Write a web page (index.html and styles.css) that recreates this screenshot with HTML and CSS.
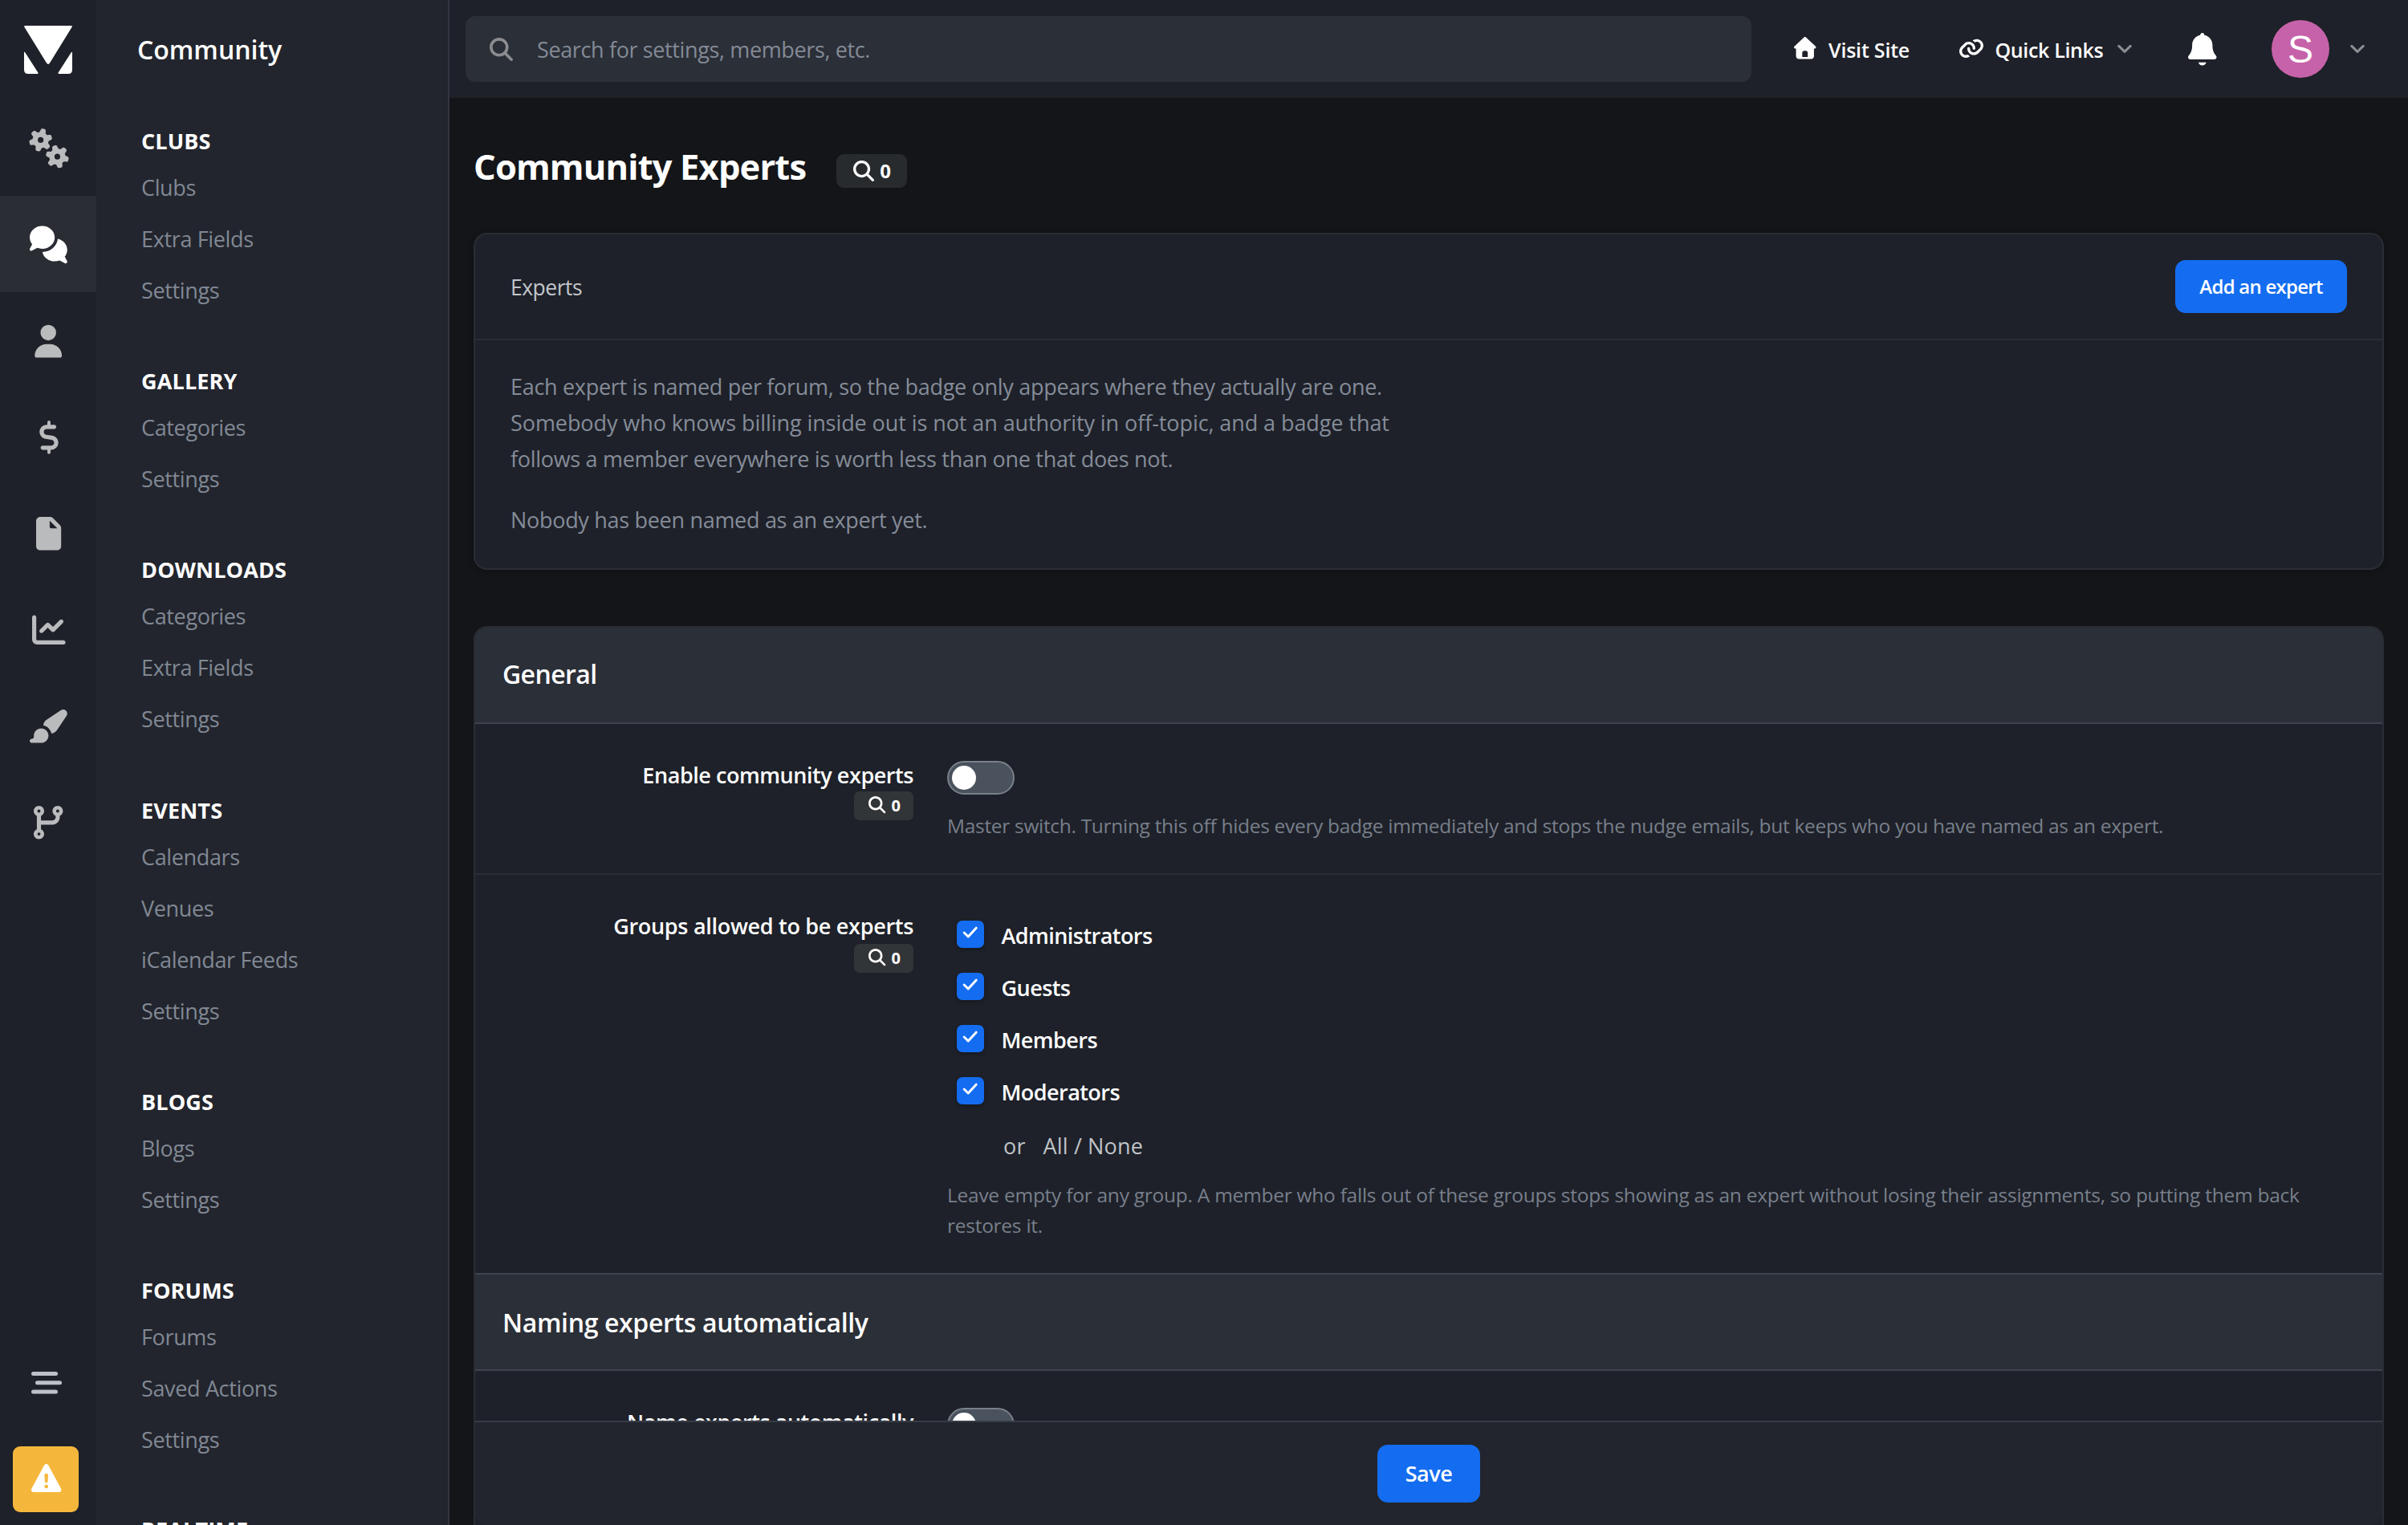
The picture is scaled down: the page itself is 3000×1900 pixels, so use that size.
FILE: index.html
```html
<!DOCTYPE html>
<html lang="en">
<head>
<meta charset="utf-8">
<title>Community Experts</title>
<link rel="stylesheet" href="styles.css">
</head>
<body>
<svg class="sprite" aria-hidden="true">
  <symbol id="i-search" viewBox="0 0 512 512"><path d="M416 208c0 45.9-14.9 88.3-40 122.7L502.6 457.4c12.5 12.5 12.5 32.8 0 45.3s-32.8 12.5-45.3 0L330.7 376C296.3 401.1 253.9 416 208 416 93.1 416 0 322.9 0 208S93.1 0 208 0 416 93.1 416 208zM208 352a144 144 0 1 0 0-288 144 144 0 1 0 0 288z"/></symbol>
  <symbol id="i-check" viewBox="0 0 20 16"><path d="M2.2 8.2L7.4 13.4L17.6 2.2" fill="none" stroke="#fff" stroke-width="3" stroke-linecap="round" stroke-linejoin="round"/></symbol>
  <symbol id="i-angle" viewBox="0 0 18 10"><path d="M1.8 1.4L9 8.4L16.2 1.4" fill="none" stroke="currentColor" stroke-width="3" stroke-linecap="round" stroke-linejoin="round"/></symbol>
</svg>
<div class="app">
  <nav class="rail">
    <a class="logo"><svg width="60" height="60" viewBox="0 0 60 60"><path d="M1 0H59Q60.5 0 59.6 1.8L32 46.6Q30 49.4 28 46.6L.4 1.8Q-.5 0 1 0zM0 33Q.4 32.2 1.4 33.6L17.4 58.4Q18 60 16.6 60H5Q0 60 0 55zM60 33Q59.6 32.2 58.6 33.6L42.6 58.4Q42 60 43.4 60H55Q60 60 60 55z"/></svg></a>
    <a class="tab"><svg width="52" height="41.6" viewBox="0 0 640 512"><path d="M415.9 210.5c12.2-3.3 25 2.5 30.5 13.8L465 261.9c10.3 1.4 20.4 4.2 29.9 8.1l35-23.3c10.5-7 24.4-5.6 33.3 3.3l19.2 19.2c8.9 8.9 10.3 22.9 3.3 33.3l-23.3 34.9c1.9 4.7 3.6 9.6 5 14.7 1.4 5.1 2.3 10.1 3 15.2l37.7 18.6c11.3 5.6 17.1 18.4 13.8 30.5l-7 26.2c-3.3 12.1-14.6 20.3-27.2 19.5l-42-2.7c-6.3 8.1-13.6 15.6-21.9 22l2.7 41.9c.8 12.6-7.4 24-19.5 27.2l-26.2 7c-12.2 3.3-24.9-2.5-30.5-13.8l-18.6-37.6c-10.3-1.4-20.4-4.2-29.9-8.1l-35 23.3c-10.5 7-24.4 5.6-33.3-3.3l-19.2-19.2c-8.9-8.9-10.3-22.8-3.3-33.3l23.3-35c-1.9-4.7-3.6-9.6-5-14.7s-2.3-10.2-3-15.2l-37.7-18.6c-11.3-5.6-17-18.4-13.8-30.5l7-26.2c3.3-12.1 14.6-20.3 27.2-19.5l41.9 2.7c6.3-8.1 13.6-15.6 21.9-22l-2.7-41.8c-.8-12.6 7.4-24 19.5-27.2l26.2-7zM448.4 340a44 44 0 1 0 .1 88 44 44 0 1 0 -.1-88zM224.9-45.5l26.2 7c12.1 3.3 20.3 14.7 19.5 27.2l-2.7 41.8c8.3 6.4 15.6 13.8 21.9 22l42-2.7c12.5-.8 23.9 7.4 27.2 19.5l7 26.2c3.2 12.1-2.5 24.9-13.8 30.5l-37.7 18.6c-.7 5.1-1.7 10.2-3 15.2s-3.1 10-5 14.7l23.3 35c7 10.5 5.6 24.4-3.3 33.3L307.3 262c-8.9 8.9-22.8 10.3-33.3 3.3L239 242c-9.5 3.9-19.6 6.7-29.9 8.1l-18.6 37.6c-5.6 11.3-18.4 17-30.5 13.8l-26.2-7c-12.2-3.3-20.3-14.7-19.5-27.2l2.7-41.9c-8.3-6.4-15.6-13.8-21.9-22l-42 2.7c-12.5 .8-23.9-7.4-27.2-19.5l-7-26.2c-3.2-12.1 2.5-24.9 13.8-30.5l37.7-18.6c.7-5.1 1.7-10.1 3-15.2 1.4-5.1 3-10 5-14.7L55.1 46.5c-7-10.5-5.6-24.4 3.3-33.3L77.6-6c8.9-8.9 22.8-10.3 33.3-3.3l35 23.3c9.5-3.9 19.6-6.7 29.9-8.1l18.6-37.6c5.6-11.3 18.3-17 30.5-13.8zM192.4 84a44 44 0 1 0 0 88 44 44 0 1 0 0-88z"/></svg></a>
    <a class="tab tab-active"><svg width="46.8" height="41.6" viewBox="0 0 576 512"><path d="M384 144c0 97.2-86 176-192 176-26.7 0-52.1-5-75.2-14L35.2 349.2c-9.3 4.9-20.7 3.2-28.2-4.2s-9.2-18.9-4.2-28.2l35.6-67.2C14.3 220.2 0 183.6 0 144 0 46.8 86-32 192-32S384 46.8 384 144zm0 368c-94.1 0-172.4-62.1-188.8-144 120-1.5 224.3-86.9 235.8-202.7 83.3 19.2 145 88.3 145 170.7 0 39.6-14.3 76.2-38.4 105.6l35.6 67.2c4.9 9.3 3.2 20.7-4.2 28.2s-18.9 9.2-28.2 4.2L459.2 498c-23.1 9-48.5 14-75.2 14z"/></svg></a>
    <a class="tab"><svg width="36.4" height="41.6" viewBox="0 0 448 512"><path d="M224 248a120 120 0 1 0 0-240 120 120 0 1 0 0 240zm-29.7 56C95.8 304 16 383.8 16 482.3 16 498.7 29.3 512 45.7 512l356.6 0c16.4 0 29.7-13.3 29.7-29.7 0-98.5-79.8-178.3-178.3-178.3l-59.4 0z"/></svg></a>
    <a class="tab"><svg width="26" height="41.6" viewBox="0 0 320 512"><path d="M136 24c0-13.3 10.7-24 24-24s24 10.7 24 24l0 40 56 0c17.7 0 32 14.3 32 32s-14.3 32-32 32l-114.9 0c-24.9 0-45.1 20.2-45.1 45.1 0 22.5 16.5 41.5 38.7 44.7l91.6 13.1c53.8 7.7 93.7 53.7 93.7 108 0 60.3-48.9 109.1-109.1 109.1l-10.9 0 0 40c0 13.3-10.7 24-24 24s-24-10.7-24-24l0-40-72 0c-17.7 0-32-14.3-32-32s14.3-32 32-32l130.9 0c24.9 0 45.1-20.2 45.1-45.1 0-22.5-16.5-41.5-38.7-44.7l-91.6-13.1C55.9 273.5 16 227.4 16 173.1 16 112.9 64.9 64 125.1 64l10.9 0 0-40z"/></svg></a>
    <a class="tab"><svg width="31.2" height="41.6" viewBox="0 0 384 512"><path d="M0 64C0 28.7 28.7 0 64 0L213.5 0c17 0 33.3 6.7 45.3 18.7L365.3 125.3c12 12 18.7 28.3 18.7 45.3L384 448c0 35.3-28.7 64-64 64L64 512c-35.3 0-64-28.7-64-64L0 64zm208-5.5l0 93.5c0 13.3 10.7 24 24 24L325.5 176 208 58.5z"/></svg></a>
    <a class="tab"><svg width="41.6" height="41.6" viewBox="0 0 512 512"><path d="M64 64c0-17.7-14.3-32-32-32S0 46.3 0 64L0 400c0 44.2 35.8 80 80 80l400 0c17.7 0 32-14.3 32-32s-14.3-32-32-32L80 416c-8.8 0-16-7.2-16-16L64 64zm406.6 86.6c12.5-12.5 12.5-32.8 0-45.3s-32.8-12.5-45.3 0L320 210.7l-57.4-57.4c-12.5-12.5-32.8-12.5-45.3 0l-96 96c-12.5 12.5-12.5 32.8 0 45.3s32.8 12.5 45.3 0L240 221.3l57.4 57.4c12.5 12.5 32.8 12.5 45.3 0l128-128z"/></svg></a>
    <a class="tab"><svg width="46.8" height="41.6" viewBox="0 0 576 512"><path d="M480.5 10.3L259.1 158c-29.1 19.4-47.6 50.9-50.6 85.3 62.3 12.8 111.4 61.9 124.3 124.3 34.5-3 65.9-21.5 85.3-50.6L565.7 95.5c6.7-10.1 10.3-21.9 10.3-34.1 0-33.9-27.5-61.4-61.4-61.4-12.1 0-24 3.6-34.1 10.3zM288 400c0-61.9-50.1-112-112-112S64 338.1 64 400c0 3.9 .2 7.8 .6 11.6 1.8 17.5-10.2 36.4-27.8 36.4L32 448c-17.7 0-32 14.3-32 32s14.3 32 32 32l144 0c61.9 0 112-50.1 112-112z"/></svg></a>
    <a class="tab"><svg width="36.4" height="41.6" viewBox="0 0 448 512"><path d="M80 104a24 24 0 1 0 0-48 24 24 0 1 0 0 48zM160 80c0 32.8-19.7 61-48 73.3l0 70.7 176 0c26.5 0 48-21.5 48-48l0-22.7C307.7 141 288 112.8 288 80c0-44.2 35.8-80 80-80s80 35.8 80 80c0 32.8-19.7 61-48 73.3l0 22.7c0 61.9-50.1 112-112 112l-176 0 0 70.7c28.3 12.3 48 40.5 48 73.3 0 44.2-35.8 80-80 80S0 476.2 0 432c0-32.8 19.7-61 48-73.3l0-205.3C19.7 141 0 112.8 0 80 0 35.8 35.8 0 80 0s80 35.8 80 80zM392 80a24 24 0 1 0 -48 0 24 24 0 1 0 48 0zM80 456a24 24 0 1 0 0-48 24 24 0 1 0 0 48z"/></svg></a>
    <div class="rail-foot">
      <svg class="bars" width="38" height="28" viewBox="0 0 38 28"><rect width="33" height="5" rx="2.5"/><rect x="5" y="11.2" width="33" height="5" rx="2.5"/><rect y="22.4" width="33" height="5" rx="2.5"/></svg>
      <a class="warn"><svg width="37.4" height="37.4" viewBox="0 0 512 512"><path d="M256 0c14.7 0 28.2 8.1 35.2 21l216 400c6.7 12.4 6.4 27.4-.8 39.5S486.1 480 472 480L40 480c-14.1 0-27.2-7.4-34.4-19.5s-7.5-27.1-.8-39.5l216-400c7-12.9 20.5-21 35.2-21zm0 352a32 32 0 1 0 0 64 32 32 0 1 0 0-64zm0-192c-18.2 0-32.7 15.5-31.4 33.7l7.4 104c.9 12.6 11.4 22.3 23.9 22.3 12.6 0 23-9.7 23.9-22.3l7.4-104c1.3-18.2-13.1-33.7-31.4-33.7z"/></svg></a>
    </div>
  </nav>

  <aside class="subnav">
    <div class="subnav-title">Community</div>
    <div class="subnav-list">
      <section><h3>CLUBS</h3><a>Clubs</a><a>Extra Fields</a><a>Settings</a></section>
      <section><h3>GALLERY</h3><a>Categories</a><a>Settings</a></section>
      <section><h3>DOWNLOADS</h3><a>Categories</a><a>Extra Fields</a><a>Settings</a></section>
      <section><h3>EVENTS</h3><a>Calendars</a><a>Venues</a><a>iCalendar Feeds</a><a>Settings</a></section>
      <section><h3>BLOGS</h3><a>Blogs</a><a>Settings</a></section>
      <section><h3>FORUMS</h3><a>Forums</a><a>Saved Actions</a><a>Settings</a></section>
      <section><h3>REALTIME</h3></section>
    </div>
  </aside>

  <div class="main">
    <header class="topbar">
      <div class="search"><svg width="29" height="29"><use href="#i-search"/></svg><span>Search for settings, members, etc.</span></div>
      <a class="toplink visit"><svg width="27.5" height="27.5" viewBox="0 0 512 512"><path d="M277.8 8.6c-12.3-11.4-31.3-11.4-43.5 0l-224 208c-9.6 9-12.8 22.9-8 35.1S18.8 272 32 272l16 0 0 176c0 35.3 28.7 64 64 64l288 0c35.3 0 64-28.7 64-64l0-176 16 0c13.2 0 25-8.1 29.8-20.3s1.6-26.2-8-35.1l-224-208zM240 320l32 0c26.5 0 48 21.5 48 48l0 96-128 0 0-96c0-26.5 21.5-48 48-48z"/></svg><span>Visit Site</span></a>
      <a class="toplink quick"><svg width="30" height="26.6" viewBox="0 0 576 512"><path d="M419.5 96c-16.6 0-32.7 4.5-46.8 12.7-15.8-16-34.2-29.4-54.5-39.5 28.2-24 64.1-37.2 101.3-37.2 86.4 0 156.5 70 156.5 156.5 0 41.5-16.5 81.3-45.8 110.6l-71.1 71.1c-29.3 29.3-69.1 45.8-110.6 45.8-86.4 0-156.5-70-156.5-156.5 0-1.5 0-3 .1-4.5 .5-17.7 15.2-31.6 32.9-31.1s31.6 15.2 31.1 32.9c0 .9 0 1.8 0 2.6 0 51.1 41.4 92.5 92.5 92.5 24.5 0 48-9.7 65.4-27.1l71.1-71.1c17.3-17.3 27.1-40.9 27.1-65.4 0-51.1-41.4-92.5-92.5-92.5zM275.2 173.3c-1.9-.8-3.8-1.9-5.5-3.1-12.6-6.5-27-10.2-42.1-10.2-24.5 0-48 9.7-65.4 27.1L91.1 258.2c-17.3 17.3-27.1 40.9-27.1 65.4 0 51.1 41.4 92.5 92.5 92.5 16.5 0 32.6-4.4 46.7-12.6 15.8 16 34.2 29.4 54.6 39.5-28.2 23.9-64 37.2-101.3 37.2-86.4 0-156.5-70-156.5-156.5 0-41.5 16.5-81.3 45.8-110.6l71.1-71.1c29.3-29.3 69.1-45.8 110.6-45.8 86.6 0 156.5 70.6 156.5 156.9 0 1.3 0 2.6 0 3.9-.4 17.7-15.1 31.6-32.8 31.2s-31.6-15.1-31.2-32.8c0-.8 0-1.5 0-2.3 0-33.7-18-63.3-44.8-79.6z"/></svg><span>Quick Links</span></a>
      <svg class="angle" width="18" height="10"><use href="#i-angle"/></svg>
      <svg class="bell" width="35.5" height="40.6" viewBox="0 0 448 512"><path d="M224 0c-17.7 0-32 14.3-32 32l0 3.2C119 50 64 114.6 64 192l0 21.7c0 48.1-16.4 94.8-46.4 132.4L7.8 358.3C2.7 364.6 0 372.4 0 380.5 0 400.1 15.9 416 35.5 416l376.9 0c19.6 0 35.5-15.9 35.5-35.5 0-8.1-2.7-15.9-7.8-22.2l-9.8-12.2C400.4 308.5 384 261.8 384 213.7l0-21.7c0-77.4-55-142-128-156.8l0-3.2c0-17.7-14.3-32-32-32zM162 464c7.1 27.6 32.2 48 62 48s54.9-20.4 62-48l-124 0z"/></svg>
      <span class="avatar">S</span>
      <svg class="angle" width="18" height="10"><use href="#i-angle"/></svg>
    </header>

    <div class="content">
      <div class="title-row"><h1>Community Experts</h1><span class="badge badge-lg"><svg width="26" height="26"><use href="#i-search"/></svg>0</span></div>

      <section class="card intro">
        <div class="intro-head"><span>Experts</span><button class="btn btn-sm">Add an expert</button></div>
        <div class="intro-body">
          <p>Each expert is named per forum, so the badge only appears where they actually are one.<br><span class="loose">Somebody who knows billing inside out is not an authority in off-topic, and a badge that</span><br>follows a member everywhere is worth less than one that does not.</p>
          <p>Nobody has been named as an expert yet.</p>
        </div>
      </section>

      <section class="card form">
        <div class="form-scroll">
          <h2 class="first">General</h2>
          <div class="row">
            <div class="label"><span>Enable community experts</span><span class="badge"><svg width="21.5" height="21.5"><use href="#i-search"/></svg>0</span></div>
            <div class="field"><span class="toggle"></span><p class="help">Master switch. Turning this off hides every badge immediately and stops the nudge emails, but keeps who you have named as an expert.</p></div>
          </div>
          <div class="row groups">
            <div class="label"><span>Groups allowed to be experts</span><span class="badge"><svg width="21.5" height="21.5"><use href="#i-search"/></svg>0</span></div>
            <div class="field checks">
              <label><span class="box"><svg width="19.5" height="15.6"><use href="#i-check"/></svg></span>Administrators</label>
              <label><span class="box"><svg width="19.5" height="15.6"><use href="#i-check"/></svg></span>Guests</label>
              <label><span class="box"><svg width="19.5" height="15.6"><use href="#i-check"/></svg></span>Members</label>
              <label><span class="box"><svg width="19.5" height="15.6"><use href="#i-check"/></svg></span>Moderators</label>
              <div class="bulk"><span>or</span><a>All / None</a></div>
              <p class="help">Leave empty for any group. A member who falls out of these groups stops showing as an expert without losing their assignments, so putting them back restores it.</p>
            </div>
          </div>
          <h2>Naming experts automatically</h2>
          <div class="row">
            <div class="label"><span>Name experts automatically</span></div>
            <div class="field"><span class="toggle"></span></div>
          </div>
        </div>
        <div class="form-foot"><button class="btn">Save</button></div>
      </section>
    </div>
  </div>
</div>
</body>
</html>
```
FILE: styles.css
```css
* { box-sizing: border-box; margin: 0; padding: 0; }
html, body { height: 1900px; overflow: hidden; }
body { background: #141518; color: #fff; font: 27px/45px "Open Sans", "Noto Sans", sans-serif; letter-spacing: -0.3px; }
svg { fill: currentColor; fill-rule: evenodd; overflow: visible; flex: none; display: block; }
.sprite { width: 0; height: 0; float: left; }
.app { display: flex; width: 3000px; height: 1900px; }

/* icon rail */
.rail { width: 120px; flex: none; background: #1e2129; display: flex; flex-direction: column; color: #babbbd; }
.logo { height: 124px; padding: 32px 0 0 30px; color: #fff; }
.tab { height: 120px; padding: 2px 0 0 1px; display: flex; align-items: center; justify-content: center; }
.tab-active { background: #2b2d35; color: #fff; }
.rail-foot { margin-top: auto; padding: 0 0 16px 16px; }
.bars { margin: 0 0 65px 23px; color: #bcc0c8; }
.warn { width: 82px; height: 82px; padding-left: 1px; border-radius: 9px; background: #f5b73b; color: #fff; display: flex; align-items: center; justify-content: center; }

/* section menu */
.subnav { width: 440px; flex: none; background: #22252d; border-right: 2px solid #33363f; overflow: hidden; }
.subnav-title { height: 122px; padding-left: 51px; font-size: 32px; line-height: 124px; font-weight: 600; letter-spacing: 0; }
.subnav-list { padding: 28px 0 0 56px; }
.subnav section { margin-bottom: 55.2px; }
.subnav h3 { font-size: 27px; line-height: 52px; font-weight: 700; letter-spacing: 0.15px; }
.subnav section:last-child h3 { line-height: 49px; }
.subnav a { display: block; line-height: 64px; color: #818894; letter-spacing: -0.35px; }

/* top bar */
.main { flex: 1; min-width: 0; display: flex; flex-direction: column; }
.topbar { height: 122px; flex: none; background: #1e2129; border-bottom: 2px solid #1e2126; padding: 2px 54px 0 20px; display: flex; align-items: center; font-weight: 600; font-size: 25px; }
.search { flex: 1; height: 82px; border-radius: 12px; background: #2b2f37; color: #838a96; display: flex; align-items: center; padding-left: 30px; font-weight: 400; font-size: 27px; letter-spacing: -0.37px; }
.search svg { color: #8b8d91; }
.search span { margin-left: 30px; padding-top: 1px; }
.toplink { display: flex; align-items: center; letter-spacing: -0.2px; }
.toplink svg { margin-top: -2px; }
.toplink span { padding-top: 2px; }
.visit { margin-left: 53px; width: 206px; }
.visit span { margin-left: 16px; }
.quick { width: 197px; letter-spacing: -0.35px; }
.quick span { margin-left: 15px; }
.angle { color: #8c8e93; }
.bell { margin-left: 70px; }
.avatar { width: 72px; height: 72px; margin: 0 26px 0 69px; border-radius: 50%; background: #c662a9; text-align: center; font: 48px/74px "Liberation Sans", Arial, sans-serif; letter-spacing: 0; }

/* page */
.content { flex: 1; min-height: 0; padding: 0 30px; display: flex; flex-direction: column; }
.title-row { height: 168px; flex: none; display: flex; align-items: center; gap: 38px; }
h1 { padding-top: 3px; font-size: 43.5px; line-height: 60px; font-weight: 700; letter-spacing: -0.84px; }
.badge { display: inline-flex; align-items: center; width: 74px; height: 36px; padding-left: 18px; gap: 7px; border-radius: 7px; background: #323538; font-size: 20px; line-height: 36px; font-weight: 700; }
.badge svg { margin-top: -3px; }
.badge-lg { width: 88px; height: 42px; padding-left: 21px; margin-top: 14px; background: #282b2e; font-size: 24px; line-height: 42px; border-radius: 9px; }
.badge-lg svg { margin-top: 0; }
.card { border: 2px solid #292d34; border-radius: 17px; background: #1e2129; overflow: hidden; }
.intro { height: 420px; flex: none; box-shadow: 0 2px 6px #101114; }
.intro-head { height: 132px; padding: 0 44px; border-bottom: 2px solid #292d34; display: flex; align-items: center; justify-content: space-between; color: #c2c6cb; font-size: 26.5px; letter-spacing: -0.5px; }
.intro-head span { padding-top: 2px; }
.intro-body { padding: 35px 44px 0; color: #858c99; }
.intro-body p { margin-bottom: 31px; }
.loose { letter-spacing: -0.08px; }
.btn { border: 0; width: 128px; height: 72px; border-radius: 13px; background: #146df0; color: #fff; font: 600 27px/72px "Open Sans", sans-serif; letter-spacing: -0.5px; text-align: center; }
.btn-sm { width: 214px; height: 66px; font-size: 24px; line-height: 66px; letter-spacing: -0.75px; }

/* settings form */
.form { flex: 1; min-height: 0; margin-top: 70px; display: flex; flex-direction: column; border-bottom: 0; border-radius: 17px 17px 0 0; }
.form-scroll { flex: 1; min-height: 0; overflow: hidden; }
h2 { height: 122px; padding-left: 34px; background: #2b2f37; border-top: 2px solid #3e434f; border-bottom: 2px solid #3e434f; font-size: 32px; line-height: 119px; font-weight: 600; letter-spacing: -0.35px; }
h2.first { height: 120px; border-top: 0; line-height: 115px; letter-spacing: -0.6px; }
.row { display: flex; padding-top: 44px; height: 188px; border-bottom: 2px solid #292d36; }
.row.groups { height: 496px; border-bottom: 0; }
.label { width: 546px; flex: none; display: flex; flex-direction: column; align-items: flex-end; gap: 2px; font-weight: 600; line-height: 40px; letter-spacing: -0.45px; }
.label .badge { margin-top: -2px; }
.groups .label { letter-spacing: -0.3px; }
.groups .badge { margin-top: 0; }
.field { width: 1755px; margin-left: 42px; }
.toggle { display: block; width: 84px; height: 42px; margin-top: 2px; padding: 4px; border: 2px solid #798089; border-radius: 21px; background: #4a525e; }
.toggle::before { content: ""; display: block; width: 30px; height: 30px; border-radius: 50%; background: #fff; }
.help { color: #787f8b; font-size: 24.5px; line-height: 38px; letter-spacing: -0.31px; }
.toggle + .help { margin-top: 20px; }
.groups .help { letter-spacing: -0.26px; }
.checks { margin-top: -2px; }
.checks label { display: flex; align-items: center; height: 65px; padding: 1px 0 0 12px; gap: 21.5px; font-weight: 600; letter-spacing: -0.55px; }
.box { width: 34px; height: 34px; margin-top: -2px; border-radius: 7px; background: #146df0; display: flex; justify-content: center; padding-top: 7px; box-shadow: 0 2px 4px #16181d; }
.bulk { display: flex; gap: 22px; margin: 17px 0 23px 70px; line-height: 38px; color: #bfc3c8; letter-spacing: 0.15px; }
.form-foot { height: 130px; flex: none; background: #22252d; border-top: 2px solid #373c47; border-radius: 0 0 15px 15px; display: flex; align-items: center; justify-content: center; }
```
